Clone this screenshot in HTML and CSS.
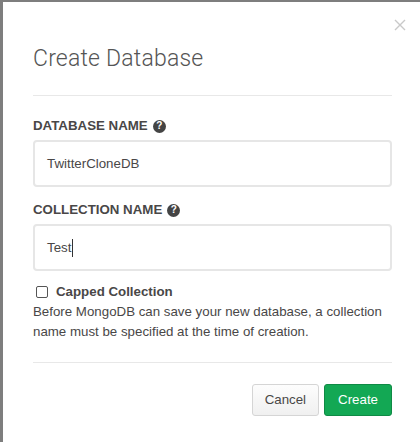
FILE: index.html
```html
<!DOCTYPE html>
<html lang="en">
<head>
    <meta charset="UTF-8">
    <title>Create Database</title>
    <link rel="stylesheet" href="styles.css">
</head>
<body>
    <div class="modal">
        <div class="modal-header">
            <button class="close" aria-label="Close">
                <svg width="12" height="12" viewBox="0 0 12 12">
                    <path d="M1 1 L11 11 M11 1 L1 11" stroke="#c9c9c9" stroke-width="1.4" fill="none"/>
                </svg>
            </button>
            <h4 class="modal-title">Create Database</h4>
        </div>

        <div class="modal-body">
            <div class="form-group">
                <label class="form-label">Database Name <span class="help">?</span></label>
                <div class="input">TwitterCloneDB</div>
            </div>
            <div class="form-group">
                <label class="form-label">Collection Name <span class="help">?</span></label>
                <div class="input">Test<span class="caret"></span></div>
            </div>
            <div class="checkbox-row">
                <span class="checkbox"></span>
                <span class="checkbox-label">Capped Collection</span>
            </div>
            <p class="note">Before MongoDB can save your new database, a collection name must be specified at the time of creation.</p>
        </div>

        <div class="modal-footer">
            <button class="btn btn-default">Cancel</button>
            <button class="btn btn-primary">Create</button>
        </div>
    </div>
</body>
</html>
```

FILE: styles.css
```css
* { margin: 0; padding: 0; box-sizing: border-box; }
html, body { height: 100%; overflow: hidden; }
body {
    background: #7e7e7e;
    font-family: "Liberation Sans", Arial, sans-serif;
    color: #494747;
    font-size: 13.3px;
}
.modal {
    position: relative;
    background: #fff;
    width: 419px;
    min-height: 460px;
    margin: 2px 0 0 3px;
    padding: 0 30px;
}
.modal-header {
    padding: 42px 0 21px;
    border-bottom: 1px solid #e8e8e8;
}
.modal-title {
    font-family: Roboto, "Liberation Sans", sans-serif;
    font-weight: 300;
    font-size: 23px;
    line-height: 30px;
    color: #555;
    letter-spacing: 0.2px;
}
.close {
    position: absolute;
    top: 17px;
    right: 16px;
    background: none;
    border: none;
    display: flex;
}
.modal-body {
    padding-top: 20px;
}
.form-group {
    margin-bottom: 13px;
}
.form-label {
    display: flex;
    align-items: center;
    gap: 5px;
    font-weight: bold;
    text-transform: uppercase;
    line-height: 20px;
    margin-bottom: 4px;
    color: #494747;
}
.help {
    display: inline-flex;
    align-items: center;
    justify-content: center;
    width: 13px;
    height: 13px;
    border-radius: 50%;
    background: #444;
    color: #fff;
    font-size: 10px;
    font-weight: bold;
    line-height: 1;
}
.input {
    height: 47px;
    border: 2px solid #e6e6e6;
    border-radius: 4px;
    padding: 0 12px;
    display: flex;
    align-items: center;
    color: #494747;
}
.caret {
    display: inline-block;
    width: 1px;
    height: 18px;
    background: #333;
    margin-left: 1px;
}
.checkbox-row {
    display: flex;
    align-items: center;
    margin-top: -2px;
    line-height: 20px;
}
.checkbox {
    width: 12px;
    height: 12px;
    border: 1.5px solid #555;
    border-radius: 2px;
    margin: 0 8px 0 3px;
}
.checkbox-label {
    font-weight: bold;
}
.note {
    line-height: 19.5px;
}
.modal-footer {
    margin-top: 21px;
    border-top: 1px solid #e8e8e8;
    padding-top: 21px;
    display: flex;
    justify-content: flex-end;
    gap: 5px;
}
.btn {
    font-family: "Liberation Sans", Arial, sans-serif;
    font-size: 13.3px;
    line-height: 20px;
    padding: 5px 12px;
    border-radius: 3px;
    border: 1px solid;
}
.btn-default {
    background: linear-gradient(#fdfdfd, #f0f0f0);
    border-color: #d5d5d5;
    color: #494747;
}
.btn-primary {
    background: #13a854;
    border-color: #0f8a45;
    color: #fff;
    padding: 5px 13px;
}
```
